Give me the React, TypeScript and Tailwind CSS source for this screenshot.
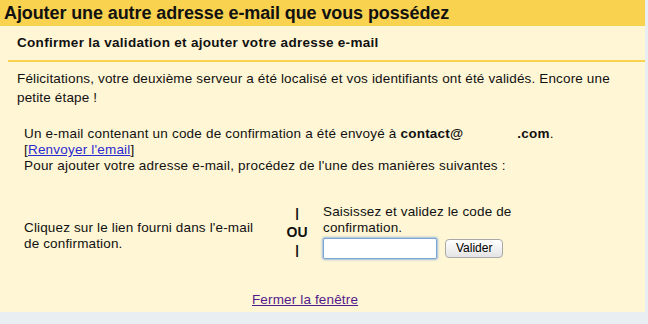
import React from "react";

export default function App() {
  const font = { fontFamily: '"Liberation Sans", Arial, sans-serif' };
  return (
    <div className="w-[648px] h-[324px] bg-[#e9eef3] text-black" style={font}>
      <div className="w-[645px] h-[312px] bg-[#fff6d5] flex flex-col">
        <div className="h-[26px] bg-[#f9d24f] pl-[4px] text-[18px] font-bold leading-[26px] tracking-[-0.1px] text-[#111]">
          Ajouter une autre adresse e-mail que vous possédez
        </div>
        <div className="ml-[8px] flex flex-col">
          <div className="h-[36px] border-b-2 border-[#f9d24f] pl-[9px] flex items-center text-[13.5px] font-bold tracking-[0.3px] text-[#111]">
            Confirmer la validation et ajouter votre adresse e-mail
          </div>
          <div className="pl-[9px] pt-[7px] text-[13.5px] leading-[19px] tracking-[0.15px] pr-[20px] text-[#111]">
            Félicitations, votre deuxième serveur a été localisé et vos identifiants ont été validés. Encore une petite étape !
          </div>
          <div className="pl-[16px] pt-[19px] text-[13.5px] leading-[16px] tracking-[0.2px] text-[#111]">
            <div>
              Un e-mail contenant un code de confirmation a été envoyé à <b>contact@</b>
              <span className="inline-block w-[54px]"></span>
              <b>.com</b>.
            </div>
            <div>
              [<a className="text-[#2a2ad0] underline" href="#">Renvoyer l'email</a>]
            </div>
            <div>Pour ajouter votre adresse e-mail, procédez de l'une des manières suivantes :</div>
          </div>
          <div className="pl-[16px] pt-[30px] flex items-stretch text-[13.5px] leading-[16px] tracking-[0.15px] text-[#111]">
            <div className="w-[256px] flex items-center pt-[8px]">
              <div className="w-[242px]">Cliquez sur le lien fourni dans l'e-mail de confirmation.</div>
            </div>
            <div className="w-[34px] flex flex-col items-center justify-center text-[13px] font-bold leading-[18.5px] tracking-normal">
              <span>|</span>
              <span className="text-[14px]">OU</span>
              <span>|</span>
            </div>
            <div className="ml-[9px] flex flex-col">
              <div className="w-[200px]">Saisissez et validez le code de confirmation.</div>
              <div className="flex items-center mt-[2px]">
                <input
                  className="w-[114px] h-[21px] bg-white border border-[#7fa7d6] rounded-[2px] shadow-[0_0_2px_1px_rgba(90,150,220,0.6)] outline-none"
                  type="text"
                />
                <button className="ml-[8px] h-[19px] px-[10px] text-[12px] leading-[17px] tracking-normal border border-[#a9a9a9] rounded-[4px] bg-gradient-to-b from-white to-[#e4e4e4] text-black">
                  Valider
                </button>
              </div>
            </div>
          </div>
          <div className="mt-[30px] text-center text-[13.5px] tracking-[0.15px] pr-[43px]">
            <a className="text-[#551a8b] underline" href="#">Fermer la fenêtre</a>
          </div>
        </div>
      </div>
    </div>
  );
}
